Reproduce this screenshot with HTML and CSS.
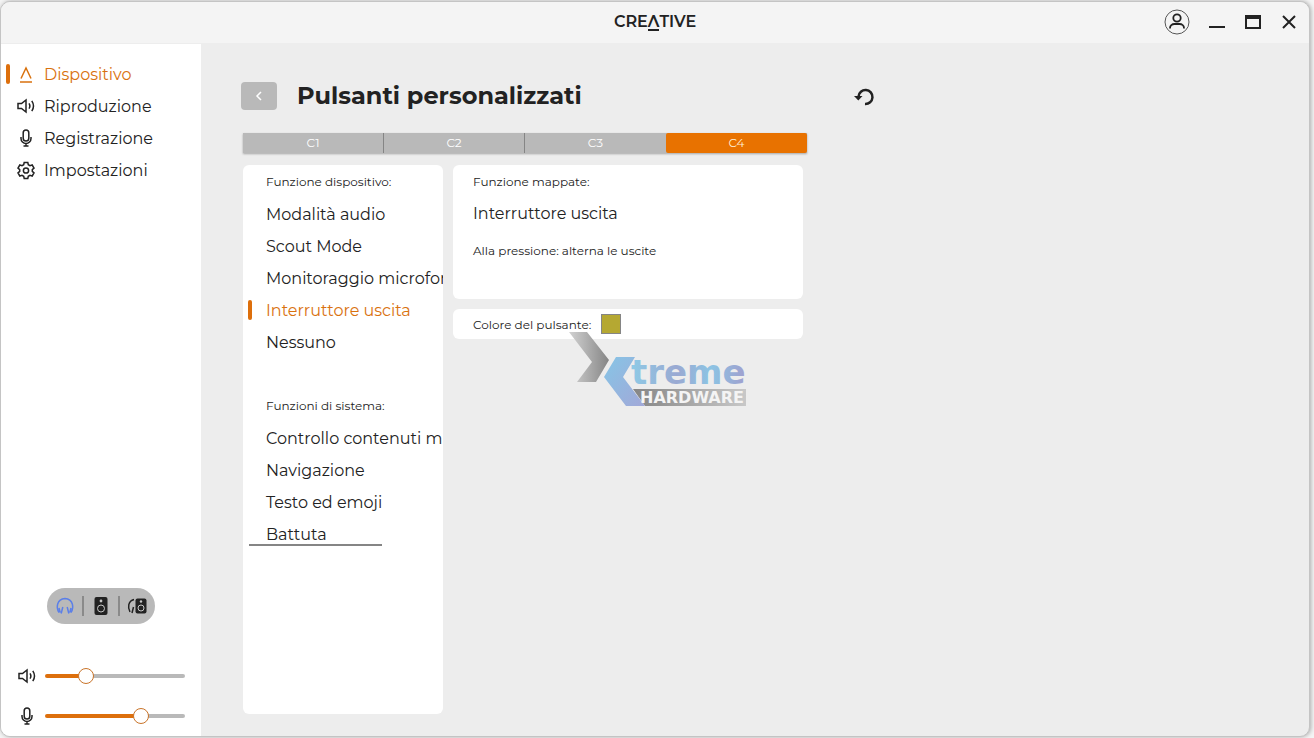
FILE: index.html
```html
<!DOCTYPE html>
<html lang="it">
<head>
    <meta charset="UTF-8">
    <meta name="viewport" content="width=device-width, initial-scale=1.0">
    <title>Creative - Pulsanti personalizzati</title>
    <link rel="stylesheet" href="styles.css">
</head>
<body>
    <svg class="symbols" aria-hidden="true">
        <symbol id="icon-speaker" viewBox="0 0 20 20">
            <path d="M2 7.500h3.500L10 4v12l-4.500-3.500H2z"/>
            <path d="M13 7.300q1.800 2.700 0 5.400M15.800 4.800q3.400 5.200 0 10.400"/>
        </symbol>
        <symbol id="icon-mic" viewBox="0 0 20 20">
            <rect x="7.200" y="2" width="5.600" height="11" rx="2.800"/>
            <path d="M5 9v1.500a5 5 0 0 0 10 0V9M10 15.500V18M7.500 18h5"/>
        </symbol>
    </svg>

    <div class="window">
        <header class="title-bar">
            <div class="logo">CRE<span class="logo-a">Λ</span>TIVE</div>
            <div class="window-buttons">
                <button class="account" aria-label="Account">
                    <svg viewBox="0 0 26 26">
                        <circle class="ring" cx="13" cy="13" r="12"/>
                        <circle cx="13" cy="9" r="3.700"/>
                        <path d="M6 19.500v-.5a4.500 4 0 0 1 4.500-4h5a4.500 4 0 0 1 4.500 4v.5"/>
                    </svg>
                </button>
                <button aria-label="Riduci a icona">
                    <svg viewBox="0 0 20 20"><path d="M2 15h16"/></svg>
                </button>
                <button aria-label="Ingrandisci">
                    <svg viewBox="0 0 20 20"><path d="M3 4h14v12H3z"/><path class="thick" d="M2 5h16"/></svg>
                </button>
                <button aria-label="Chiudi">
                    <svg viewBox="0 0 20 20"><path d="M4 4l12 12M16 4L4 16"/></svg>
                </button>
            </div>
        </header>

        <aside class="sidebar">
            <nav class="menu">
                <a href="#" class="active">
                    <svg viewBox="0 0 20 20"><path d="M5 14.500L10 4l5 10.500M4 18h12"/></svg>
                    Dispositivo
                </a>
                <a href="#"><svg><use href="#icon-speaker"/></svg>Riproduzione</a>
                <a href="#"><svg><use href="#icon-mic"/></svg>Registrazione</a>
                <a href="#">
                    <svg viewBox="0 0 20 20">
                        <path d="M8.200 2.500h3.600l.5 2.200 1.700 1 2.200-.7 1.800 3.100-1.700 1.500v1.800l1.700 1.500-1.800 3.100-2.200-.7-1.700 1-.5 2.200H8.200l-.5-2.200-1.700-1-2.200.7L2 12.900l1.700-1.500V9.600L2 8.100 3.800 5l2.200.7 1.700-1z"/>
                        <circle cx="10" cy="10.500" r="2.600"/>
                    </svg>
                    Impostazioni
                </a>
            </nav>

            <div class="outputs">
                <button class="selected" aria-label="Cuffie">
                    <svg viewBox="0 0 20 20">
                        <path d="M4 16.500C1 12 1.500 3 10 2.500c8.500.5 9 9.500 6 14M7.800 11l-1.600 6.500M12.200 11l1.600 6.500M4 12l1.200 4.500M16 12l-1.200 4.500"/>
                    </svg>
                </button>
                <button aria-label="Altoparlanti">
                    <svg viewBox="0 0 20 20">
                        <rect class="solid" x="3.500" y="1" width="13" height="18" rx="2"/>
                        <circle class="cone" cx="10" cy="12.500" r="3.500"/>
                        <circle class="dot" cx="10" cy="5" r="1.400"/>
                    </svg>
                </button>
                <button aria-label="Cuffie e altoparlanti">
                    <svg viewBox="0 0 20 20">
                        <path d="M7 3.500C1 5 .5 11.500 3 16M6.500 11L5 17"/>
                        <rect class="solid" x="8.500" y="2.500" width="11" height="15" rx="2"/>
                        <circle class="cone" cx="14" cy="12" r="3"/>
                        <circle class="dot" cx="14" cy="5.500" r="1.200"/>
                    </svg>
                </button>
            </div>

            <div class="levels">
                <label for="volume"><svg><use href="#icon-speaker"/></svg></label>
                <input type="range" id="volume" aria-label="Volume" value="27" style="--value: 27%">
                <label for="mic"><svg><use href="#icon-mic"/></svg></label>
                <input type="range" id="mic" aria-label="Microfono" value="71" style="--value: 71%">
            </div>
        </aside>

        <main class="page">
            <div class="page-header">
                <button class="back" aria-label="Indietro">
                    <svg viewBox="0 0 10 12"><path d="M7 2L3 6l4 4"/></svg>
                </button>
                <h1>Pulsanti personalizzati</h1>
                <button class="reset" aria-label="Ripristina">
                    <svg viewBox="0 0 22 20">
                        <path d="M5.500 10.500A7 7 0 1 1 12 18"/>
                        <path class="arrow" d="M1 10h8.500l-4.200 4.500z"/>
                    </svg>
                </button>
            </div>

            <div class="tabs">
                <button>C1</button>
                <button>C2</button>
                <button>C3</button>
                <button class="active">C4</button>
            </div>

            <div class="panels">
                <section class="functions">
                    <h2>Funzione dispositivo:</h2>
                    <ul>
                        <li><a href="#">Modalità audio</a></li>
                        <li><a href="#">Scout Mode</a></li>
                        <li><a href="#">Monitoraggio microfono</a></li>
                        <li><a href="#" class="active">Interruttore uscita</a></li>
                        <li><a href="#">Nessuno</a></li>
                    </ul>
                    <h2>Funzioni di sistema:</h2>
                    <ul class="system">
                        <li><a href="#">Controllo contenuti multimediali</a></li>
                        <li><a href="#">Navigazione</a></li>
                        <li><a href="#">Testo ed emoji</a></li>
                        <li><a href="#">Battuta</a></li>
                    </ul>
                </section>

                <div class="details">
                    <section class="card mapped">
                        <h2>Funzione mappate:</h2>
                        <p class="name">Interruttore uscita</p>
                        <p class="hint">Alla pressione: alterna le uscite</p>
                    </section>
                    <section class="card color-row">
                        <label for="color">Colore del pulsante:</label>
                        <input type="color" id="color" value="#b5a832">
                    </section>

                    <svg class="watermark" viewBox="0 0 180 78" role="img" aria-label="Xtreme Hardware">
                        <defs>
                            <linearGradient id="steel">
                                <stop offset="0" stop-color="#d2d2d2"/>
                                <stop offset="1" stop-color="#858585"/>
                            </linearGradient>
                            <linearGradient id="ice" x1="0" y1="0" x2="1" y2="1">
                                <stop offset="0" stop-color="#86c5e6"/>
                                <stop offset="1" stop-color="#a2a8d8"/>
                            </linearGradient>
                            <linearGradient id="word">
                                <stop offset="0" stop-color="#8ecae6"/>
                                <stop offset=".4" stop-color="#9aa9d2"/>
                                <stop offset=".7" stop-color="#8cc4e4"/>
                                <stop offset="1" stop-color="#a09fce"/>
                            </linearGradient>
                            <linearGradient id="plate">
                                <stop offset="0" stop-color="#858585"/>
                                <stop offset="1" stop-color="#c8c8c8"/>
                            </linearGradient>
                        </defs>
                        <path fill="url(#steel)" d="M0 1h18l22 28-13 22H8l15-20z"/>
                        <path fill="url(#plate)" d="M64 58h113v17H76z"/>
                        <path fill="url(#ice)" d="M47 26h19L54 46l22 29H57L35 46z"/>
                        <text class="word" x="62" y="53" fill="url(#word)">treme</text>
                        <text class="plate-text" x="71" y="72">HARDWARE</text>
                    </svg>
                </div>
            </div>
        </main>
    </div>

    <script>
        // keep the coloured part of the sliders in sync with the thumb
        document.querySelectorAll('.levels input').forEach(input => {
            input.addEventListener('input', () => {
                input.style.setProperty('--value', input.value + '%');
            });
        });
    </script>
</body>
</html>
```
FILE: styles.css
```css
* {
    box-sizing: border-box;
}

body {
    margin: 0;
    padding: 1px 4px 1px 0;
    height: 100vh;
    background: #f4f4f4;
    color: #222;
    font-family: Montserrat, Inter, sans-serif;
    font-size: 16px;
    overflow: hidden;
}

h1, h2, p, ul {
    margin: 0;
    padding: 0;
}

a {
    color: inherit;
    text-decoration: none;
}

button {
    padding: 0;
    border: none;
    background: none;
    color: inherit;
    font-family: inherit;
    cursor: pointer;
}

svg {
    display: block;
    width: 20px;
    height: 20px;
    fill: none;
    stroke: currentColor;
    stroke-width: 1.5;
}

.symbols {
    display: none;
}

.window {
    display: grid;
    grid-template: 42px 1fr / 200px 1fr;
    height: 100%;
    border: 1px solid #c4c4c4;
    border-radius: 10px;
    background: #ededed;
    box-shadow: 1px 0 4px rgba(0, 0, 0, 0.3);
    overflow: hidden;
}

/* title bar */

.title-bar {
    grid-column: 1 / -1;
    display: grid;
    grid-template-columns: 1fr auto 1fr;
    align-items: center;
    padding-bottom: 1px;
    border-bottom: 1px solid #ededed;
    background: #f4f4f4;
}

.logo {
    grid-column: 2;
    font-size: 16px;
    font-weight: 600;
    line-height: 16px;
}

.logo-a {
    display: inline-block;
    border-bottom: 2px solid #222;
    line-height: 14px;
}

.window-buttons {
    justify-self: end;
    display: flex;
    align-items: center;
    gap: 16px;
    padding-right: 10px;
}

.window-buttons svg {
    stroke-width: 2;
}

.window-buttons .account {
    margin-right: 1px;
}

.window-buttons .account svg {
    width: 26px;
    height: 26px;
    stroke-width: 1.8;
}

.account .ring {
    stroke: #555;
    stroke-width: 1;
}

.thick {
    stroke-width: 4;
}

/* sidebar */

.sidebar {
    display: flex;
    flex-direction: column;
    padding-top: 14px;
    background: #fff;
}

.menu a,
.functions a {
    display: flex;
    align-items: center;
    position: relative;
    height: 32px;
    white-space: nowrap;
}

.menu a {
    gap: 8px;
    padding-left: 15px;
}

.active {
    color: #d9720f;
}

.menu .active::before,
.functions .active::before {
    content: "";
    position: absolute;
    left: 5px;
    width: 4px;
    height: 20px;
    border-radius: 2px;
    background: #dd6f0c;
}

.outputs {
    display: flex;
    align-self: center;
    margin-top: auto;
    margin-bottom: 32px;
    border-radius: 18px;
    background: #b9b9b9;
}

.outputs button {
    display: flex;
    align-items: center;
    justify-content: center;
    position: relative;
    width: 36px;
    height: 36px;
}

.outputs button + button::before {
    content: "";
    position: absolute;
    left: -1px;
    width: 2px;
    height: 20px;
    background: #8a8a8a;
}

.outputs .selected {
    color: #5b7fe8;
}

.solid {
    fill: #222;
    stroke: none;
}

.cone {
    stroke: #c8c8c8;
    stroke-width: 1;
}

.dot {
    fill: #c8c8c8;
    stroke: none;
}

.levels {
    display: grid;
    grid-template-columns: 20px 140px;
    grid-auto-rows: 40px;
    align-items: center;
    gap: 0 8px;
    padding-left: 16px;
}

.levels input {
    -webkit-appearance: none;
    appearance: none;
    width: 100%;
    height: 4px;
    margin: 0;
    border-radius: 2px;
    background: linear-gradient(to right, #dd6f0c var(--value), #b9b9b9 var(--value));
}

.levels input::-webkit-slider-thumb {
    -webkit-appearance: none;
    width: 16px;
    height: 16px;
    border: 1px solid #c9742a;
    border-radius: 50%;
    background: #fff;
}

/* page */

.page {
    display: flex;
    flex-direction: column;
    min-height: 0;
    padding: 34px 40px 22px;
}

.page-header {
    display: flex;
    align-items: center;
    width: 634px;
    height: 36px;
    margin-bottom: 19px;
}

.back {
    display: flex;
    align-items: center;
    justify-content: center;
    width: 36px;
    height: 28px;
    border-radius: 4px;
    background: #b9b9b9;
    color: #fff;
}

.back svg {
    width: 10px;
    height: 12px;
}

h1 {
    margin-left: 20px;
    font-size: 24px;
    font-weight: 700;
    line-height: 36px;
}

.reset {
    margin-left: auto;
}

.reset svg {
    width: 22px;
    height: 20px;
    stroke-width: 2.5;
}

.reset .arrow {
    fill: #222;
    stroke: none;
}

.tabs {
    display: grid;
    grid-template-columns: repeat(4, 1fr);
    width: 564px;
    margin: 0 0 12px 2px;
    background: #b9b9b9;
    box-shadow: 0 1px 2px rgba(0, 0, 0, 0.3);
}

.tabs button {
    height: 20px;
    border-right: 1px solid #858585;
    color: #fff;
    font-size: 12px;
    line-height: 20px;
}

.tabs button:nth-child(3) {
    border-right: none;
}

.tabs .active {
    border-right: none;
    border-radius: 2px;
    background: #e87200;
    color: #fff0d8;
}

.panels {
    flex: 1;
    display: grid;
    grid-template-columns: 200px 350px;
    gap: 10px;
    min-height: 0;
    margin-left: 2px;
}

.functions,
.card {
    border-radius: 6px;
    background: #fff;
}

.functions {
    overflow: hidden;
}

.functions h2,
.functions a {
    padding-left: 23px;
}

h2 {
    padding-top: 1px;
    font-size: 12px;
    font-weight: 400;
    line-height: 32px;
}

ul + h2 {
    margin-top: 31px;
}

ul {
    list-style: none;
}

.system {
    position: relative;
}

/* horizontal scroll thumb over the end of the list */
.system::after {
    content: "";
    position: absolute;
    left: 6px;
    bottom: 4px;
    width: 133px;
    height: 2px;
    background: #858585;
}

.details {
    position: relative;
    display: flex;
    flex-direction: column;
    gap: 10px;
}

.card {
    padding: 0 20px;
}

.mapped {
    padding-bottom: 27px;
}

.name {
    line-height: 32px;
}

.hint {
    font-size: 12px;
    line-height: 42px;
}

.color-row {
    display: flex;
    align-items: center;
    gap: 10px;
    height: 30px;
    font-size: 12px;
}

.color-row input {
    -webkit-appearance: none;
    appearance: none;
    width: 20px;
    height: 20px;
    padding: 0;
    border: 1px solid #858585;
    background: none;
}

.color-row input::-webkit-color-swatch-wrapper {
    padding: 0;
}

.color-row input::-webkit-color-swatch {
    border: none;
}

.watermark {
    position: absolute;
    left: 116px;
    top: 166px;
    width: 180px;
    height: 78px;
    stroke: none;
    pointer-events: none;
}

.watermark text {
    font-family: "DejaVu Sans", sans-serif;
    font-weight: 700;
}

.word {
    font-size: 34px;
}

.plate-text {
    fill: #f4f4f4;
    font-size: 16px;
}
```
